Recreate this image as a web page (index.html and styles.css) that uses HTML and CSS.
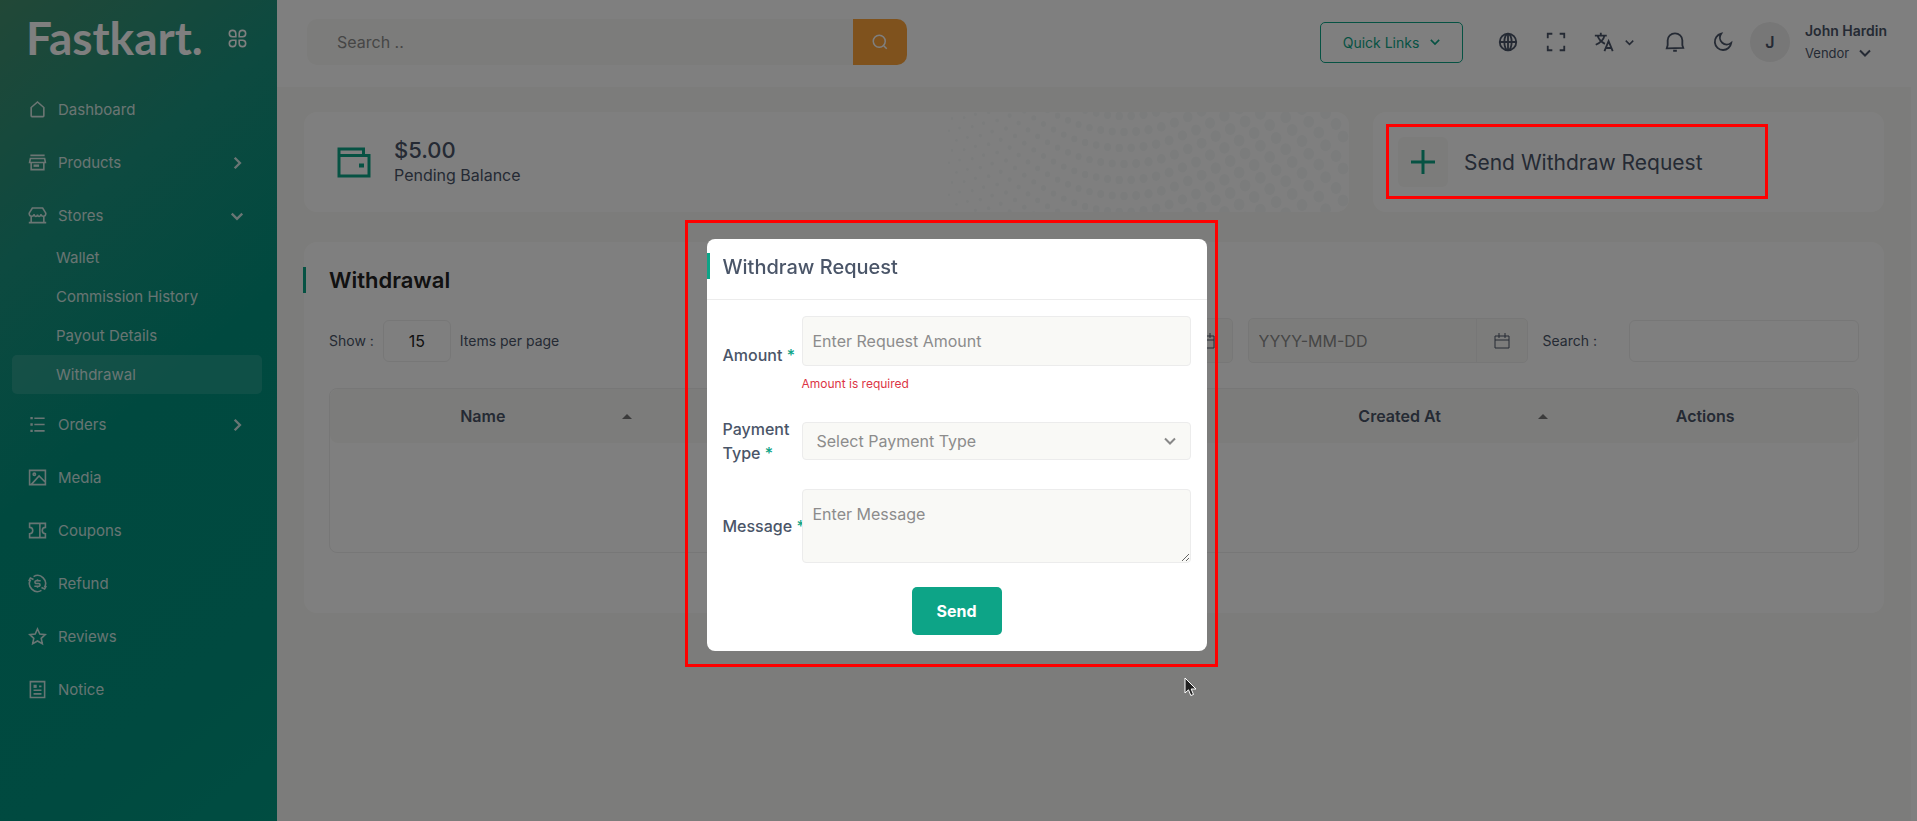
FILE: index.html
```html
<!DOCTYPE html>
<html lang="en">
<head>
<meta charset="utf-8">
<title>Withdrawal - Fastkart</title>
<link rel="stylesheet" href="styles.css">
</head>
<body>
<div class="app">
  <aside class="sidebar">
    <div class="brand">
      <a class="logo" href="#">Fastkart.</a>
      <button class="brand-toggle" type="button" aria-label="Toggle sidebar">
        <svg viewBox="0 0 20 20" width="19" height="19" fill="none" stroke="currentColor" stroke-width="1.700"><path d="M8.200 8.200H4.700A3.400 3.400 0 1 1 8.200 4.700zM11.800 8.200H15.300A3.400 3.400 0 1 0 11.800 4.700zM8.200 11.800H4.700A3.400 3.400 0 1 0 8.200 15.300zM11.800 11.800H15.300A3.400 3.400 0 1 1 11.800 15.300z"/></svg>
      </button>
    </div>
    <nav class="menu">
      <a class="item" href="#"><svg class="ico" viewBox="0 0 24 24"><path d="M19 21H5a1 1 0 0 1-1-1V9.500l8-7 8 7V20a1 1 0 0 1-1 1z"/></svg><span>Dashboard</span></a>
      <a class="item" href="#"><svg class="ico" viewBox="0 0 24 24"><path d="M3 3h18M3 7h18l1 5H2zM4 12v9h16v-9"/><path d="M7 16h7" stroke-width="3"/></svg><span>Products</span><svg class="arrow" viewBox="0 0 12 12"><path d="M4 1.500L8.500 6 4 10.500"/></svg></a>
      <a class="item" href="#"><svg class="ico" viewBox="0 0 24 24"><path d="M4 13v8h16v-8M1 21h22M5.500 2.500h13L22.500 9c0 5-5.500 5-6 1.500-1 3.500-4 3.500-4.500.5-.5 3-3.500 3-4.500-.5C7 14 1.500 14 1.500 9z"/></svg><span>Stores</span><svg class="arrow" viewBox="0 0 12 12"><path d="M1.500 4L6 8.500 10.500 4"/></svg></a>
      <div class="submenu">
        <a href="#">Wallet</a>
        <a href="#">Commission History</a>
        <a href="#">Payout Details</a>
        <a href="#" class="active">Withdrawal</a>
      </div>
      <a class="item" href="#"><svg class="ico" viewBox="0 0 24 24"><path d="M8 4h13M8 12h13M8 20h13"/><path d="M3 4h3M3 12h3M3 20h3" stroke-width="3"/></svg><span>Orders</span><svg class="arrow" viewBox="0 0 12 12"><path d="M4 1.500L8.500 6 4 10.500"/></svg></a>
      <a class="item" href="#"><svg class="ico" viewBox="0 0 24 24"><path d="M2 3h20v18H2zM4 21l10-11 8 8"/><circle cx="8" cy="8" r="1.500"/></svg><span>Media</span></a>
      <a class="item" href="#"><svg class="ico" viewBox="0 0 24 24"><path d="M2 3h20v5a4 4 0 0 0 0 8v5H2v-5a4 4 0 0 0 0-8zM15 3v18"/></svg><span>Coupons</span></a>
      <a class="item" href="#"><svg class="ico" viewBox="0 0 24 24"><path d="M7 3.300A10 10 0 0 1 20.700 17M17 20.700A10 10 0 0 1 3.300 7M1 9l2-4 4 2M23 15l-2 4-4-2"/><path d="M16 8.500h-5.500a1.750 1.750 0 0 0 0 3.500h3a1.750 1.750 0 0 1 0 3.500H8M12 6.500v2M12 15.500v2"/></svg><span>Refund</span></a>
      <a class="item" href="#"><svg class="ico" viewBox="0 0 24 24"><path d="M12 2.500l2.900 6.300 6.900.8-5.100 4.700 1.400 6.800-6.100-3.400-6.100 3.400 1.400-6.800L2.200 9.600l6.900-.8z"/></svg><span>Reviews</span></a>
      <a class="item" href="#"><svg class="ico" viewBox="0 0 24 24"><path d="M3 2h18v20H3zM7 13h10M7 17.500h10M14 8h3"/><path d="M7 8h4" stroke-width="4"/></svg><span>Notice</span></a>
    </nav>
  </aside>

  <div class="page">
    <header class="topbar">
      <form class="search">
        <input type="text" placeholder="Search .." aria-label="Search">
        <button type="button" aria-label="Search"><svg viewBox="0 0 24 24" width="18" height="18" fill="none" stroke="currentColor" stroke-width="2"><circle cx="11" cy="11" r="8"/><path d="M17 17l4 4"/></svg></button>
      </form>
      <div class="tools">
        <button class="quick" type="button">Quick Links <svg viewBox="0 0 12 12" width="10" height="10" fill="none" stroke="currentColor" stroke-width="2"><path d="M1 3.500l5 5 5-5"/></svg></button>
        <button class="tool" type="button" aria-label="Website"><svg viewBox="0 0 24 24" width="22" height="22"><circle cx="12" cy="12" r="9"/><ellipse cx="12" cy="12" rx="4" ry="9"/><path d="M3 12h18M12 3v18"/></svg></button>
        <button class="tool" type="button" aria-label="Full screen"><svg viewBox="0 0 24 24" width="22" height="22"><path d="M3 8V3h5M16 3h5v5M21 16v5h-5M8 21H3v-5"/></svg></button>
        <button class="tool lang" type="button" aria-label="Language"><svg viewBox="0 0 24 24" width="22" height="22"><path d="M2 5h13M8.500 2v3M5 5c1 4 4 7 8 9M12.500 5c-1 5-5 8-9.500 10M12.500 22l4.500-11 4.500 11M14 18.500h6"/></svg><svg viewBox="0 0 12 12" width="9" height="9"><path d="M1 3.500l5 5 5-5"/></svg></button>
        <button class="tool" type="button" aria-label="Notifications"><svg viewBox="0 0 24 24" width="22" height="22"><path d="M3 19l18-.5-1-3V10a8 7.500 0 0 0-16 0v5.500zM10 21.500h4"/></svg></button>
        <button class="tool" type="button" aria-label="Dark mode"><svg viewBox="0 0 24 24" width="22" height="22"><path d="M10 3a7.500 7.500 0 0 0 11 10A9 9 0 1 1 10 3z"/></svg></button>
        <div class="user">
          <span class="avatar">J</span>
          <span class="who"><strong>John Hardin</strong><span>Vendor <svg viewBox="0 0 12 12" width="12" height="12" fill="none" stroke="currentColor" stroke-width="2"><path d="M1 3.500l5 5 5-5"/></svg></span></span>
        </div>
      </div>
    </header>

    <main class="content">
      <div class="cards">
        <section class="card balance">
          <svg class="dots" id="dots" viewBox="0 0 420 100" width="420" height="100" aria-hidden="true"></svg>
          <svg class="wallet" viewBox="0 0 34 31" width="34" height="31" fill="none" stroke="currentColor" stroke-width="3"><path d="M2 7.500V2h24.500v5.500M2 8.500h30V29H2z"/><path d="M22 18.500h5" stroke-width="4"/></svg>
          <div><h3>$5.00</h3><p>Pending Balance</p></div>
        </section>
        <section class="card request">
          <button type="button" class="plus" aria-label="Send Withdraw Request"><svg viewBox="0 0 24 24" width="24" height="24" stroke="currentColor" stroke-width="3"><path d="M12 0v24M0 12h24"/></svg></button>
          <span>Send Withdraw Request</span>
          <div class="mark mark-card"></div>
        </section>
      </div>

      <section class="panel">
        <h1>Withdrawal</h1>
        <div class="filters">
          <label for="per">Show :</label>
          <input id="per" class="per" type="text" value="15">
          <span>Items per page</span>
          <div class="dates">
            <div class="date"><input type="text" aria-label="From date"><button type="button" aria-label="Pick from date"><svg viewBox="0 0 16 16" width="16" height="16"><path d="M1 3h14v12H1zM1 7h14M5 0v5M11 0v5"/></svg></button></div>
            <div class="date"><input type="text" placeholder="YYYY-MM-DD" aria-label="To date"><button type="button" aria-label="Pick to date"><svg viewBox="0 0 16 16" width="16" height="16"><path d="M1 3h14v12H1zM1 7h14M5 0v5M11 0v5"/></svg></button></div>
            <label for="find">Search :</label>
            <input id="find" class="find" type="text">
          </div>
        </div>
        <div class="table-box">
          <table>
            <thead><tr>
              <th>Name<i></i></th><th></th><th></th><th>Created At<i></i></th><th>Actions</th>
            </tr></thead>
            <tbody><tr><td colspan="5"></td></tr></tbody>
          </table>
        </div>
      </section>
    </main>
  </div>
  <div class="rail"></div>
</div>

<div class="backdrop">
  <div class="modal" role="dialog" aria-labelledby="title">
    <div class="mark mark-modal"></div>
    <h2 id="title">Withdraw Request</h2>
    <form class="form">
      <div class="row">
        <label for="amount">Amount <b>*</b></label>
        <div class="field"><input id="amount" type="text" placeholder="Enter Request Amount"><p class="error">Amount is required</p></div>
      </div>
      <div class="row">
        <label for="type">Payment Type <b>*</b></label>
        <div class="select"><select id="type"><option>Select Payment Type</option></select><svg viewBox="0 0 12 12" width="12" height="12" fill="none" stroke="currentColor" stroke-width="2"><path d="M1 3.500l5 5 5-5"/></svg></div>
      </div>
      <div class="row">
        <label for="msg" class="nowrap">Message <b>*</b></label>
        <textarea id="msg" placeholder="Enter Message"></textarea>
      </div>
      <button class="send" type="button">Send</button>
    </form>
  </div>
</div>
<svg class="cursor" viewBox="0 0 13 20" width="13" height="20"><path d="M1 1v15l3.500-3.200 2.300 5.700 2.700-1-2.300-5.500H12z" fill="#222" stroke="#fff"/></svg>
<script src="dots.js"></script>
</body>
</html>
```

FILE: styles.css
```css
* { box-sizing: border-box; }
body { margin: 0; font-family: Inter, "Open Sans", sans-serif; font-size: 14px; color: #4a5568; background: #f9f9f6; }
h1, h2, h3, p { margin: 0; }
a { color: inherit; text-decoration: none; }
button, input, select, textarea { font: inherit; color: inherit; margin: 0; }
button { border: 0; background: none; padding: 0; display: flex; align-items: center; justify-content: center; }
svg { display: block; flex: none; }
input::placeholder, textarea::placeholder { color: #8c8c8c; opacity: 1; }

.app { display: flex; min-height: 100vh; }
.rail { width: 6px; background: #fff; }

.sidebar { width: 277px; flex: none; color: rgba(255, 255, 255, .92); background: linear-gradient(140deg, #44906f 0%, #1b9480 25%, #00937f 50%, #009480 80%, #009a83 100%); }
.brand { height: 87px; display: flex; align-items: flex-start; justify-content: space-between; padding: 12px 30px 0 26px; }
.logo { font: 700 46px/52px Lato, sans-serif; color: #fff; }
.brand-toggle { margin-top: 17px; color: #fff; }
.menu { display: flex; flex-direction: column; gap: 8px; }
.item { height: 45px; display: flex; align-items: center; gap: 11px; padding: 0 33px 0 28px; font-size: 15px; color: rgba(255, 255, 255, .82); }
.item span { flex: 1; }
.ico { width: 19px; height: 19px; fill: none; stroke: currentColor; stroke-width: 2; }
.arrow { width: 14px; height: 14px; fill: none; stroke: currentColor; stroke-width: 2; }
.submenu { display: flex; flex-direction: column; margin-top: -8px; padding: 0 15px 0 12px; font-size: 15px; color: rgba(255, 255, 255, .82); }
.submenu a { height: 39px; display: flex; align-items: center; padding-left: 44px; border-radius: 5px; }
.submenu .active { background: rgba(255, 255, 255, .12); }

.page { flex: 1; min-width: 0; }
.topbar { height: 87px; background: #fff; display: flex; align-items: flex-start; justify-content: space-between; padding: 19px 24px 0 30px; }
.search { display: flex; width: 600px; height: 46px; border-radius: 10px; overflow: hidden; background: #f9f9f6; }
.search input { flex: 1; border: 0; background: none; padding: 0 30px; font-size: 16px; }
.search button { width: 54px; background: #ffa53b; color: #fff; }
.tools { display: flex; align-items: center; height: 46px; color: #4a5568; }
.quick { width: 143px; height: 41px; gap: 11px; border: 1px solid #0da487; border-radius: 5px; color: #0da487; margin-right: 34px; }
.tool { margin-right: 26px; }
.tool svg { fill: none; stroke: currentColor; stroke-width: 2; }
.tool:nth-of-type(6) { margin-right: 16px; }
.lang { gap: 10px; margin-right: 30px; }
.user { display: flex; align-items: center; gap: 15px; }
.avatar { width: 40px; height: 40px; border-radius: 50%; background: #efefef; display: grid; place-items: center; font-size: 16px; font-weight: 600; }
.who { display: flex; flex-direction: column; gap: 2px; line-height: 20px; }
.who strong { font-weight: 600; }
.who span { display: flex; align-items: center; gap: 10px; font-size: 13px; }

.content { padding: 25px 27px; display: flex; flex-direction: column; gap: 30px; }
.cards { display: grid; grid-template-columns: 1045fr 511fr; gap: 24px; }
.card { height: 100px; border-radius: 13px; background: #fff; display: flex; align-items: center; position: relative; }
.balance { padding-left: 33px; gap: 23px; overflow: hidden; }
.dots { position: absolute; top: 0; right: 0; fill: #f6f9f9; }
.wallet { color: #0da487; }
.balance h3 { font-size: 22px; line-height: 26px; font-weight: 500; }
.balance p { font-size: 16px; line-height: 24px; }
.request { padding-left: 25px; gap: 16px; font-size: 21px; }
.plus { width: 50px; height: 50px; border-radius: 6px; background: #f9f9f6; color: #0da487; }
.mark { position: absolute; border: 3px solid #f00; }
.mark-card { z-index: 20; top: 12px; left: 13px; width: 382px; height: 75px; }

.panel { background: #fff; border-radius: 13px; padding: 25px 25px 60px; }
.panel h1 { position: relative; font-size: 22px; line-height: 26px; font-weight: 600; color: #222; }
.panel h1::before { content: ""; position: absolute; left: -26px; top: 0; width: 3px; height: 26px; background: #0da487; }
.filters { display: flex; align-items: center; height: 45px; margin: 25px 0; gap: 9px; }
.per { width: 68px; height: 42px; border: 1px solid #efefef; border-radius: 6px; background: none; text-align: center; color: #222; font-size: 16px; }
.dates { margin-left: auto; display: flex; align-items: center; gap: 15px; }
.date { width: 280px; height: 45px; display: flex; border: 1px solid #efefef; border-radius: 5px; background: #f9f9f6; }
.date input { flex: 1; min-width: 0; border: 0; border-right: 1px solid #efefef; background: none; padding: 0 10px; font-size: 16px; }
.date button { width: 50px; }
.date svg { fill: none; stroke: currentColor; stroke-width: 1; }
.find { width: 230px; height: 42px; border: 1px solid #efefef; border-radius: 6px; background: none; margin-left: 17px; }
.table-box { border: 1px solid #efefef; border-radius: 8px; }
table { width: 100%; table-layout: fixed; border-collapse: separate; border-spacing: 0; }
th { position: relative; height: 54px; padding: 0; background: #f9f9f6; font-size: 16px; font-weight: 600; }
th:first-child { border-radius: 8px 0 0 8px; }
th:last-child { border-radius: 0 8px 8px 0; }
th i { position: absolute; right: 4px; top: 25px; border: 5px solid transparent; border-top: 0; border-bottom-color: #777; }
td { height: 109px; padding: 0; }

.backdrop { position: fixed; inset: 0; z-index: 10; background: rgba(0, 0, 0, .5); padding: 239px 4px 0 0; display: flex; justify-content: center; align-items: flex-start; }
.modal { position: relative; width: 500px; background: #fff; border-radius: 8px; }
.mark-modal { inset: -19px -11px -16px -22px; pointer-events: none; }
.modal h2 { position: relative; font-size: 20px; line-height: 24px; font-weight: 500; padding: 16px 16px 20px; border-bottom: 1px solid #ececec; }
.modal h2::before { content: ""; position: absolute; left: 0; top: 14px; width: 3px; height: 26px; background: #0da487; }
.form { padding: 16px; display: flex; flex-direction: column; gap: 24px; font-size: 16px; }
.row { display: grid; grid-template-columns: 79px minmax(0, 1fr); align-items: center; }
.row label { font-weight: 500; line-height: 24px; }
.row b { font-weight: 500; color: #0da487; }
.nowrap { white-space: nowrap; }
.field input { width: 100%; height: 50px; padding: 0 10px; }
.field input, .select select, .row textarea { display: block; border: 1px solid #ececec; border-radius: 4px; background: #f9f9f6; }
.error { font-size: 12px; line-height: 18px; padding-top: 9px; color: #dc3545; }
.select { position: relative; margin: 5px 0; }
.select select { appearance: none; width: 100%; height: 38px; padding: 0 14px; color: #8c8c8c; }
.select svg { position: absolute; right: 15px; top: 13px; color: #888; }
.row textarea { position: relative; width: 100%; height: 74px; padding: 12px 10px; line-height: 24px; }
.send { align-self: center; width: 90px; height: 48px; border-radius: 5px; background: #0da487; color: #fff; font-weight: 700; }
.cursor { position: fixed; z-index: 30; left: 1184px; top: 677px; }
```

FILE: dots.js
```js
// Halftone wave behind the balance card: rows follow a shallow bowl that straightens to the right.
const svg = document.getElementById("dots");
const bowl = (dx) => (dx > 70 ? 17 + (dx - 70) * 0.5 : 0.0037 * dx * dx);
for (let row = -1; row < 18; row++) {
  let x = 20 + (row % 2) * 3;
  while (x < 420) {
    const t = x / 420;
    const y = row * 16 + 4 - bowl(x - 195);
    const r = Math.min(6, 1 + t * 7);
    if (y > -8 && y < 108) {
      const dot = document.createElementNS("http://www.w3.org/2000/svg", "ellipse");
      dot.setAttribute("cx", x.toFixed(1));
      dot.setAttribute("cy", y.toFixed(1));
      dot.setAttribute("rx", (r * 0.9).toFixed(1));
      dot.setAttribute("ry", r.toFixed(1));
      svg.appendChild(dot);
    }
    x += 7 + t * 11;
  }
}
```
